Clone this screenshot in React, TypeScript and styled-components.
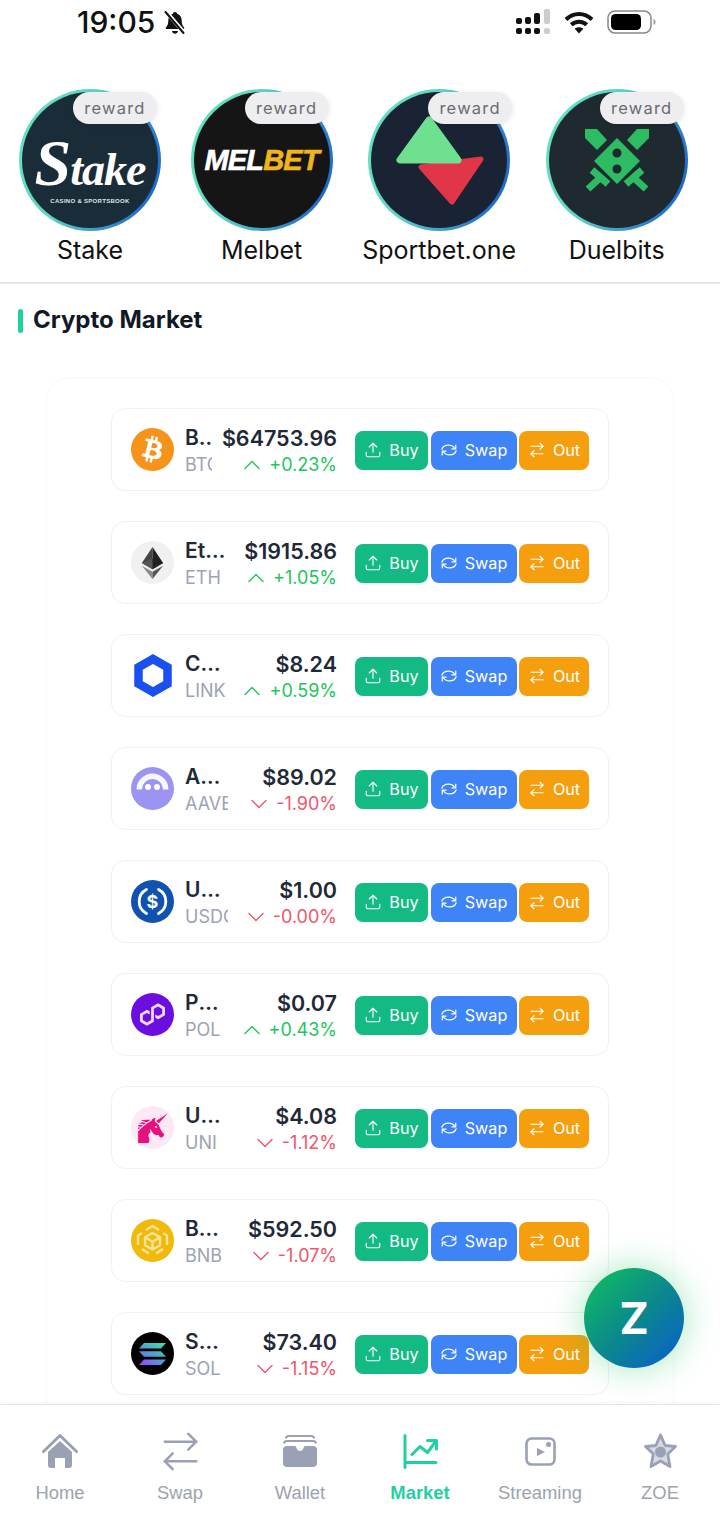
import React from "react";
import styled, { createGlobalStyle } from "styled-components";
import { ArrowRightLeft, ChevronDown, ChevronUp, Upload } from "lucide-react";
import { SiBitcoin, SiPolygon } from "react-icons/si";
import { GiUnicorn } from "react-icons/gi";

const GlobalStyle = createGlobalStyle`
  html, body {
    margin: 0;
    padding: 0;
    background: #fff;
    font-family: Inter, "Liberation Sans", sans-serif;
    overflow: hidden;
  }
`;

const Page = styled.div`
  width: 720px;
  height: 1529px;
  overflow: hidden;
  position: relative;
  background: #fff;
`;

/* status bar */
const StatusBar = styled.header`
  height: 44px;
  display: flex;
  align-items: center;
  justify-content: space-between;
  padding: 0 64px 0 77px;
`;

const Clock = styled.div`
  display: flex;
  align-items: center;
  gap: 6px;
  font-size: 30px;
  font-weight: 500;
  color: #111;
`;

const StatusIcons = styled.div`
  display: flex;
  align-items: center;
  gap: 13px;
`;

/* stories */
const Stories = styled.section`
  display: flex;
  gap: 29.6px;
  padding: 45px 0 16px 19px;
  border-bottom: 2px solid #e5e7eb;
`;

const Story = styled.div`
  position: relative;
  display: flex;
  flex-direction: column;
  align-items: center;
  gap: 3px;
`;

const Ring = styled.div`
  width: 142px;
  height: 142px;
  padding: 3px;
  box-sizing: border-box;
  border-radius: 50%;
  background: linear-gradient(110deg, #63e6be 0%, #5fd4c4 40%, #2f86cc 75%, #0b55cf 100%);
`;

const Logo = styled.div<{ $bg: string }>`
  width: 100%;
  height: 100%;
  border-radius: 50%;
  background: ${(p) => p.$bg};
  display: flex;
  flex-direction: column;
  align-items: center;
  justify-content: center;
  overflow: hidden;
  color: #fff;
  svg {
    display: block;
    width: 136px;
    height: 136px;
  }
`;

const Badge = styled.span`
  position: absolute;
  top: 3px;
  right: 4px;
  width: 84px;
  height: 32px;
  display: flex;
  align-items: center;
  justify-content: center;
  border-radius: 16px;
  background: #eeeef0;
  box-shadow: 1px 1px 5px rgba(0, 0, 0, 0.08);
  color: #6b6b72;
  font-size: 16.5px;
  letter-spacing: 1.2px;
`;

const StoryName = styled.span`
  font-size: 25px;
  line-height: 32px;
  color: #111;
`;

const StakeWord = styled.span`
  display: inline-block;
  font-family: "Liberation Serif", serif;
  font-style: italic;
  font-weight: 700;
  font-size: 46px;
  letter-spacing: -1px;
  line-height: 56px;
  margin-top: 18px;
  &::first-letter {
    font-size: 66px;
  }
`;

const StakeTag = styled.span`
  font-family: "Liberation Sans", sans-serif;
  font-size: 6px;
  font-weight: 700;
  letter-spacing: 0.3px;
  color: #dfe5ea;
`;

const MelbetWord = styled.span`
  font-family: "Liberation Sans", sans-serif;
  font-style: italic;
  font-weight: 700;
  font-size: 29px;
  letter-spacing: -0.8px;
  -webkit-text-stroke: 0.6px #fff;
  color: #fff;
  em {
    font-style: inherit;
    color: #f0b41c;
    -webkit-text-stroke: 0.6px #f0b41c;
  }
`;

/* market */
const Market = styled.section`
  padding: 0;
`;

const Title = styled.h2`
  margin: 0;
  height: 93px;
  padding: 23px 0 0 18px;
  box-sizing: border-box;
  display: flex;
  align-items: flex-start;
  gap: 10px;
  font-size: 24px;
  line-height: 26px;
  font-weight: 700;
  color: #111827;
  &::before {
    content: "";
    width: 5px;
    height: 24px;
    margin-top: 2px;
    border-radius: 3px;
    background: #1fd1a0;
  }
`;

const Panel = styled.div`
  margin: 0 46px;
  padding: 30px 64px;
  border: 1px solid #f8f8f9;
  border-radius: 24px;
  box-shadow: 0 2px 10px rgba(0, 0, 0, 0.012);
  display: flex;
  flex-direction: column;
  gap: 30px;
`;

const Row = styled.div`
  height: 83px;
  box-sizing: border-box;
  padding: 0 19px;
  display: flex;
  align-items: center;
  gap: 18px;
  border: 1px solid #f0f1f3;
  border-radius: 14px;
  background: #fff;
`;

const RowInfo = styled.div`
  flex: 1;
  min-width: 0;
  display: flex;
  align-items: center;
  gap: 10px;
`;

const CoinIcon = styled.div<{ $bg: string; $color?: string }>`
  flex: none;
  width: 43px;
  height: 43px;
  margin-right: 1px;
  border-radius: 50%;
  background: ${(p) => p.$bg};
  color: ${(p) => p.$color || "#fff"};
  display: flex;
  align-items: center;
  justify-content: center;
`;

const CoinName = styled.div`
  flex: 0 1 43px;
  min-width: 0;
  padding-top: 4px;
  overflow: hidden;
`;

const NameText = styled.div`
  font-size: 21px;
  line-height: 26px;
  font-weight: 600;
  color: #1f2937;
  white-space: nowrap;
  overflow: hidden;
  text-overflow: ellipsis;
`;

const Symbol = styled.div`
  font-size: 18px;
  line-height: 27px;
  color: #9ca3b4;
  white-space: nowrap;
  overflow: hidden;
`;

const PriceCol = styled.div`
  flex: none;
  margin-left: auto;
  padding-top: 4px;
  text-align: right;
`;

const Price = styled.div`
  font-size: 21.5px;
  line-height: 26px;
  font-weight: 600;
  color: #1f2937;
`;

const Change = styled.div<{ $up: boolean }>`
  display: flex;
  align-items: center;
  justify-content: flex-end;
  font-size: 18px;
  line-height: 27px;
  font-weight: 400;
  color: ${(p) => (p.$up ? "#22c55e" : "#f0566a")};
  svg {
    margin: -2px 3px -2px 0;
  }
`;

const Actions = styled.div`
  flex: none;
  display: flex;
  gap: 2.5px;
  margin-top: 2px;
`;

const ActionButton = styled.button<{ $bg: string; $w: number }>`
  width: ${(p) => p.$w}px;
  height: 39px;
  padding: 0 0 2px;
  border: none;
  border-radius: 8px;
  background: ${(p) => p.$bg};
  color: #fff;
  display: flex;
  align-items: center;
  justify-content: center;
  gap: 7px;
  font-family: inherit;
  font-size: 16.2px;
  font-weight: 400;
  opacity: 0.98;
`;

/* floating button */
const Fab = styled.button`
  position: absolute;
  left: 584px;
  top: 1268px;
  width: 100px;
  height: 100px;
  border: none;
  border-radius: 50%;
  background: linear-gradient(135deg, #10c25c 0%, #0b8a8a 50%, #0a5bd0 100%);
  box-shadow: 0 0 34px rgba(34, 197, 94, 0.42);
  color: #fff;
  font-family: inherit;
  font-size: 44px;
  font-weight: 700;
`;

/* bottom nav */
const BottomNav = styled.nav`
  position: absolute;
  left: 0;
  right: 0;
  bottom: 0;
  height: 125px;
  box-sizing: border-box;
  background: #fff;
  border-top: 1px solid #e3e5e8;
  box-shadow: 0 -2px 4px rgba(0, 0, 0, 0.03);
  display: flex;
`;

const Tab = styled.div<{ $active?: boolean }>`
  flex: 1;
  display: flex;
  flex-direction: column;
  align-items: center;
  padding-top: 26px;
  font-family: "Liberation Sans", sans-serif;
  font-size: 18.4px;
  font-weight: ${(p) => (p.$active ? 700 : 400)};
  color: ${(p) => (p.$active ? "#1fd1a0" : "#9ca3af")};
`;

const TabIcon = styled.div`
  height: 40px;
  display: flex;
  align-items: center;
  justify-content: center;
  margin-bottom: 11px;
  svg {
    flex: none;
  }
`;

const BellOff = () => (
  <svg width="28" height="27" viewBox="0 0 28 26" fill="#111">
    <path d="M14 2.5c1.2 0 2 .8 2.1 1.8 3 .9 4.6 3.4 4.6 6.7 0 3.4.7 5.2 2.3 6.8.6.6.2 1.7-.7 1.7H5.7c-.9 0-1.3-1.1-.7-1.7C6.6 16.2 7.3 14.4 7.3 11c0-3.3 1.6-5.8 4.6-6.7.1-1 .9-1.8 2.1-1.8z" />
    <path d="M11 21.5h6c-.2 1.6-1.4 2.7-3 2.7s-2.800-1.100-3-2.700z" />
    <path d="M5 2l18 21" stroke="#fff" strokeWidth="4" />
    <path d="M4.5 2.5l18 21" stroke="#111" strokeWidth="2" strokeLinecap="round" />
  </svg>
);

const SignalIcon = () => (
  <svg width="35" height="26" viewBox="0 0 35 26" fill="#111">
    <rect x="0" y="9" width="6" height="6" rx="2" />
    <rect x="0" y="19" width="6" height="6" rx="2" />
    <rect x="9" y="8" width="6" height="7" rx="2" />
    <rect x="9" y="19" width="6" height="6" rx="2" />
    <rect x="18" y="4" width="6" height="11" rx="2" />
    <rect x="18" y="19" width="6" height="6" rx="2" />
    <rect x="28" y="0" width="6" height="15" rx="2" fill="#ccc" />
    <rect x="28" y="19" width="6" height="6" rx="2" fill="#ccc" />
  </svg>
);

const WifiIcon = () => (
  <svg width="30" height="23" viewBox="0 0 30 23" fill="none" stroke="#111" strokeWidth="4">
    <path d="M2 8.5C9.5 1 20.5 1 28 8.5" />
    <path d="M7.3 13.8c4.3-4.2 11.1-4.2 15.4 0" />
    <path d="M15 22.5l-4.3-4.7c2.5-2 6.1-2 8.6 0z" fill="#111" stroke="none" />
  </svg>
);

const BatteryIcon = () => (
  <svg width="49" height="24" viewBox="0 0 49 24">
    <rect x="1" y="1" width="43" height="22" rx="7" fill="none" stroke="#888" strokeWidth="1.5" />
    <rect x="4" y="4" width="30" height="16" rx="4.5" fill="#000" />
    <path d="M46.5 9c1.4.5 2 1.6 2 3s-.6 2.5-2 3z" fill="#999" />
  </svg>
);

const SportbetLogo = () => (
  <svg viewBox="0 0 136 136">
    <path d="M50 75l60-8-29 43z" fill="#e1364a" stroke="#e1364a" strokeWidth="5" strokeLinejoin="round" />
    <path d="M58 28L29 68h58z" fill="#6ee08f" stroke="#6ee08f" strokeWidth="7" strokeLinejoin="round" />
  </svg>
);

const DuelbitsLogo = () => (
  <svg viewBox="3 3 136 136">
    <g fill="#2dbb63">
      <path d="M71 49l23 23-23 23-23-23z" />
      <path d="M39 40h12l10 11-10 10-12-12z" />
      <path d="M103 40H91L81 51l10 10 12-12z" />
    </g>
    <g stroke="#2dbb63" strokeWidth="7" fill="none">
      <path d="M46 81l16 14M55 88l-13 12" />
      <path d="M96 81L80 95M87 88l13 12" />
    </g>
    <circle cx="71" cy="64" r="4.5" fill="#1e2a30" />
    <circle cx="71" cy="80" r="4.5" fill="#1e2a30" />
  </svg>
);

const EthIcon = () => (
  <svg width="23" height="36" viewBox="0 0 26 36">
    <path d="M13 0L1 18l12 7z" fill="#444" />
    <path d="M13 0l12 18-12 7z" fill="#222" />
    <path d="M13 13L1 18l12 7z" fill="#555" />
    <path d="M13 13l12 5-12 7z" fill="#222" />
    <path d="M13 36L1 21l12 7z" fill="#8a8a8a" />
    <path d="M13 36l12-15-12 7z" fill="#555" />
  </svg>
);

const LinkIcon = () => (
  <svg width="38" height="43" viewBox="0 0 38 43">
    <path d="M19 5l14.5 8.3v16.4L19 38 4.5 29.7V13.3z" fill="none" stroke="#1a4ff0" strokeWidth="8.5" />
  </svg>
);

const AaveIcon = () => (
  <svg width="43" height="43" viewBox="0 0 43 43">
    <path d="M5.5 22.5a16 16 0 0 1 32 0h-5.5a10.5 10.5 0 0 0-21 0z" fill="#fff" opacity="0.92" />
    <circle cx="17" cy="20" r="3" fill="#fff" />
    <circle cx="26" cy="20" r="3" fill="#fff" />
  </svg>
);

const UsdcIcon = () => (
  <svg width="43" height="43" viewBox="0 0 43 43" fill="none" stroke="#fff">
    <path d="M15.5 9.5a13.5 13.5 0 0 0 0 24M27.5 9.5a13.5 13.5 0 0 1 0 24" strokeWidth="2.8" strokeLinecap="round" />
    <text x="21.5" y="28" fontSize="18" fontWeight="700" fill="#fff" stroke="none" textAnchor="middle" fontFamily="Inter, sans-serif">$</text>
  </svg>
);

const BnbIcon = () => (
  <svg width="33" height="33" viewBox="0 0 33 33" fill="none" stroke="#fbe39a" strokeWidth="2.4" strokeLinejoin="round">
    <path d="M10 6l6.5-4L23 6M27 9l4 2.5v9.5M27 25l-7 4.5M13 29.5L6 25M2 21v-9.5L6 9" />
    <path d="M16.5 9l7.5 4.3v7.9l-7.5 4.3L9 21.2v-7.9z" />
    <path d="M9 13.3l7.5 4.4 7.5-4.4M16.5 17.7V25" />
  </svg>
);

const SolIcon = () => (
  <svg width="27" height="22" viewBox="0 0 27 22">
    <defs>
      <linearGradient id="sol" x1="0.9" y1="0" x2="0.1" y2="1">
        <stop offset="0" stopColor="#3fe0a8" />
        <stop offset="0.5" stopColor="#4fa0d0" />
        <stop offset="1" stopColor="#9945ff" />
      </linearGradient>
    </defs>
    <path d="M5 0h22l-5 5.5H0zM0 8.2h22l5 5.5H5zM5 16.5h22L22 22H0z" fill="url(#sol)" />
  </svg>
);

const SwapIcon = () => (
  <svg width="18" height="18" viewBox="0 0 24 24" fill="none" stroke="currentColor" strokeWidth="1.6" strokeLinecap="round" strokeLinejoin="round">
    <path d="M2.5 11C3.5 7.5 7 5.5 11.5 5.5c3.5 0 6.5 1.5 8.5 4.5" />
    <path d="M21 5.5V10.5h-5" />
    <path d="M21.5 13c-1 3.5-4.5 5.5-9 5.5-3.5 0-6.5-1.5-8.5-4.5" />
    <path d="M3 18.5V13.5h5" />
  </svg>
);

const HomeNavIcon = () => (
  <svg width="36" height="35" viewBox="0 0 36 35" fill="#9aa1b5">
    <path d="M1.5 17.5L18 1.5l16.5 16" fill="none" stroke="#9aa1b5" strokeWidth="3" strokeLinecap="round" strokeLinejoin="round" />
    <path d="M18 7l12 11v13a3 3 0 0 1-3 3h-4V24H13v10H9a3 3 0 0 1-3-3V18z" />
  </svg>
);

const WalletNavIcon = () => (
  <svg width="34" height="33" viewBox="0 0 34 33" fill="#9aa1b5">
    <path d="M3 3.5Q3 1 6 1h22q3 0 3 2.5M1 8.5Q1 6 4 6h26q3 0 3 2.5" fill="none" stroke="#9aa1b5" strokeWidth="2" />
    <path d="M4 11h8q1 0 1.5 2 1 3 3.5 3t3.5-3q.5-2 1.5-2h8q4 0 4 3.5V28q0 4-4 4H4q-4 0-4-4V14.5Q0 11 4 11z" />
  </svg>
);

const MarketNavIcon = () => (
  <svg width="35" height="35" viewBox="0 0 35 35" fill="none" stroke="#1fd1a0" strokeWidth="3" strokeLinecap="round" strokeLinejoin="round">
    <path d="M2 1.5V33.5M2 28.5h31" />
    <path d="M9 20.5l8-8 7.5 6L33 7" />
    <path d="M24.5 6.5H33.5V15" />
  </svg>
);

const StreamingNavIcon = () => (
  <svg width="31" height="29" viewBox="0 0 31 29" fill="#9aa1b5">
    <rect x="1.5" y="1.5" width="28" height="26" rx="5" fill="none" stroke="#9aa1b5" strokeWidth="2.6" />
    <path d="M12 11l8 4-8 4z" />
    <circle cx="23.5" cy="7.5" r="2.5" />
  </svg>
);

const ZoeNavIcon = () => (
  <svg width="33" height="36" viewBox="0 0 33 36">
    <path d="M16.5 2l4.6 10.5 10.4 1-7.8 7.5 2.3 12.5-9.5-5.5L7 33.5 9.3 21l-7.8-7.5 10.4-1z" fill="#d8dae3" stroke="#9aa1b5" strokeWidth="2.8" strokeLinejoin="round" />
    <circle cx="16.5" cy="19" r="5.5" fill="#9aa1b5" />
  </svg>
);

const stories = [
  { name: "Stake", bg: "#1a2c38", logo: <><StakeWord>Stake</StakeWord><StakeTag>CASINO &amp; SPORTSBOOK</StakeTag></> },
  { name: "Melbet", bg: "#151515", logo: <MelbetWord>MEL<em>BET</em></MelbetWord> },
  { name: "Sportbet.one", bg: "#1a2333", logo: <SportbetLogo /> },
  { name: "Duelbits", bg: "#1e2a30", logo: <DuelbitsLogo /> },
];

const coins = [
  { name: "Bitcoin", symbol: "BTC", price: "$64753.96", change: "+0.23%", up: true, bg: "#fff", color: "#f7931a", icon: <SiBitcoin size={43} /> },
  { name: "Ethereum", symbol: "ETH", price: "$1915.86", change: "+1.05%", up: true, bg: "#f0f0f0", icon: <EthIcon /> },
  { name: "Chainlink", symbol: "LINK", price: "$8.24", change: "+0.59%", up: true, bg: "#fff", icon: <LinkIcon /> },
  { name: "Aave", symbol: "AAVE", price: "$89.02", change: "-1.90%", up: false, bg: "#9b94f0", icon: <AaveIcon /> },
  { name: "USDC", symbol: "USDC", price: "$1.00", change: "-0.00%", up: false, bg: "#0f52b0", icon: <UsdcIcon /> },
  { name: "Polygon", symbol: "POL", price: "$0.07", change: "+0.43%", up: true, bg: "#6a0fe0", color: "#f0d8ff", icon: <SiPolygon size={25} /> },
  { name: "Uniswap", symbol: "UNI", price: "$4.08", change: "-1.12%", up: false, bg: "#fde8f3", color: "#e8107e", icon: <GiUnicorn size={32} /> },
  { name: "BNB", symbol: "BNB", price: "$592.50", change: "-1.07%", up: false, bg: "#f0b90b", icon: <BnbIcon /> },
  { name: "Solana", symbol: "SOL", price: "$73.40", change: "-1.15%", up: false, bg: "#000", icon: <SolIcon /> },
];

const tabs = [
  { label: "Home", icon: <HomeNavIcon /> },
  { label: "Swap", icon: <ArrowRightLeft size={47} color="#9aa1b5" strokeWidth={1.3} /> },
  { label: "Wallet", icon: <WalletNavIcon /> },
  { label: "Market", icon: <MarketNavIcon />, active: true },
  { label: "Streaming", icon: <StreamingNavIcon /> },
  { label: "ZOE", icon: <ZoeNavIcon /> },
];

export default function App() {
  return (
    <Page>
      <GlobalStyle />
      <StatusBar>
        <Clock>
          19:05
          <BellOff />
        </Clock>
        <StatusIcons>
          <SignalIcon />
          <WifiIcon />
          <BatteryIcon />
        </StatusIcons>
      </StatusBar>

      <Stories>
        {stories.map((s) => (
          <Story key={s.name}>
            <Ring>
              <Logo $bg={s.bg}>{s.logo}</Logo>
            </Ring>
            <Badge>reward</Badge>
            <StoryName>{s.name}</StoryName>
          </Story>
        ))}
      </Stories>

      <Market>
        <Title>Crypto Market</Title>
        <Panel>
          {coins.map((c) => (
            <Row key={c.symbol}>
              <RowInfo>
                <CoinIcon $bg={c.bg} $color={c.color}>
                  {c.icon}
                </CoinIcon>
                <CoinName>
                  <NameText>{c.name}</NameText>
                  <Symbol>{c.symbol}</Symbol>
                </CoinName>
                <PriceCol>
                  <Price>{c.price}</Price>
                  <Change $up={c.up}>
                    {c.up ? <ChevronUp size={28} strokeWidth={1.2} /> : <ChevronDown size={28} strokeWidth={1.2} />}
                    {c.change}
                  </Change>
                </PriceCol>
              </RowInfo>
              <Actions>
                <ActionButton $bg="#10b981" $w={73}>
                  <Upload size={18} strokeWidth={1.5} />
                  Buy
                </ActionButton>
                <ActionButton $bg="#3b82f6" $w={86}>
                  <SwapIcon />
                  Swap
                </ActionButton>
                <ActionButton $bg="#f59e0b" $w={70}>
                  <ArrowRightLeft size={18} strokeWidth={1.5} />
                  Out
                </ActionButton>
              </Actions>
            </Row>
          ))}
        </Panel>
      </Market>

      <Fab>Z</Fab>

      <BottomNav>
        {tabs.map((t) => (
          <Tab key={t.label} $active={t.active}>
            <TabIcon>{t.icon}</TabIcon>
            {t.label}
          </Tab>
        ))}
      </BottomNav>
    </Page>
  );
}
